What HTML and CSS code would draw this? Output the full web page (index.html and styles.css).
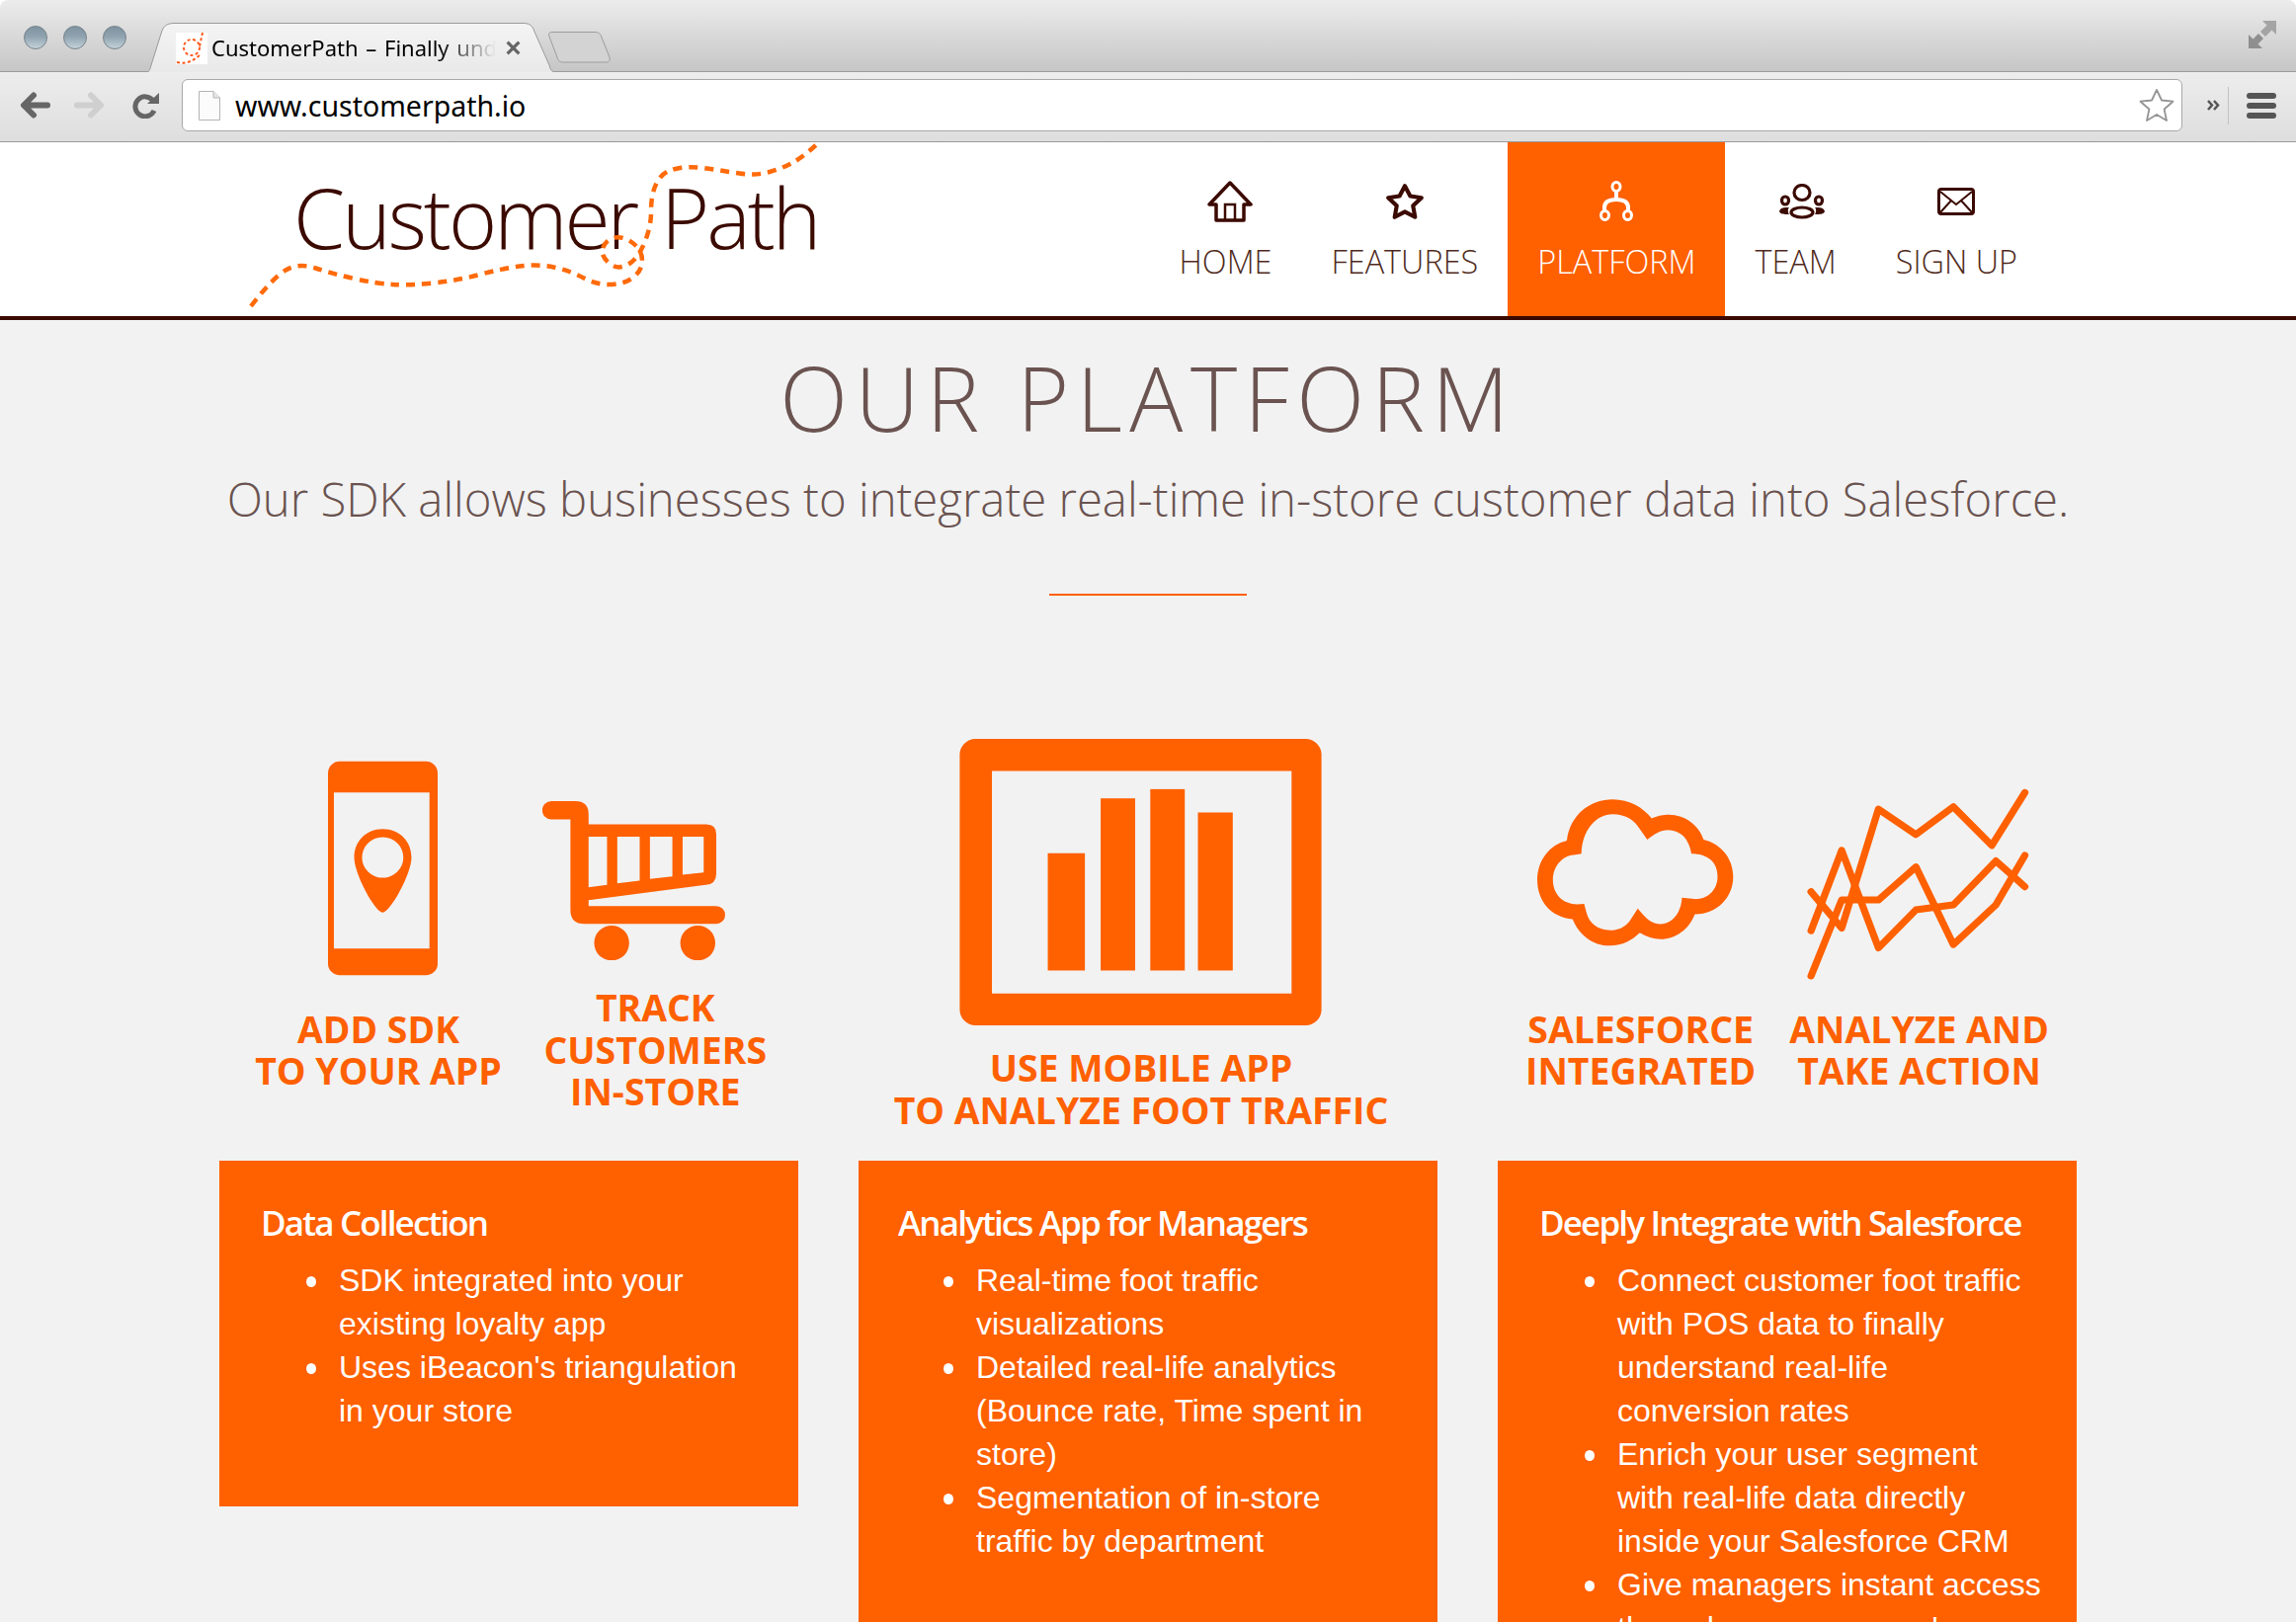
FILE: index.html
```html
<!DOCTYPE html>
<html lang="en">
<head>
    <meta charset="UTF-8">
    <title>CustomerPath - Finally understand</title>
    <link rel="stylesheet" href="styles.css">
</head>
<body>
    <!-- Browser window -->
    <div class="tabstrip">
        <div class="dots">
            <span class="dot"></span>
            <span class="dot"></span>
            <span class="dot"></span>
        </div>
        <div class="tab">
            <svg class="tab-shape" viewBox="0 0 410 50">
                <defs>
                    <linearGradient id="tabFill" x1="0" y1="0" x2="0" y2="1">
                        <stop offset="0" stop-color="#f4f4f4"/>
                        <stop offset="1" stop-color="#e9e9e9"/>
                    </linearGradient>
                </defs>
                <path d="M0 49.500C1 49 2 47 3 43L14 8C16 3 20 .5 26 .5H380C386 .5 389 3 391 9L406 43C407 47 408 49 410 49.500V50H0Z" fill="url(#tabFill)"/>
                <path d="M0 49.500C1 49 2 47 3 43L14 8C16 3 20 .5 26 .5H380C386 .5 389 3 391 9L406 43C407 47 408 49 410 49.500" fill="none" stroke="#9a9a9a"/>
            </svg>
            <svg class="favicon" viewBox="0 0 32 32">
                <rect width="32" height="32" fill="#fff"/>
                <circle cx="16" cy="15" r="8" fill="none" stroke="#ff5a1e" stroke-width="2" stroke-dasharray="3 2.500"/>
                <path d="M27 0L24 14M1 30Q14 33 25 22" fill="none" stroke="#ff5a1e" stroke-width="2" stroke-dasharray="3 2.500"/>
            </svg>
            <span class="tab-title">CustomerPath – Finally understand</span>
            <svg class="tab-close" viewBox="0 0 14 14">
                <path d="M1.500 1.500L12.500 12.500M12.500 1.500L1.500 12.500" stroke="#666" stroke-width="3"/>
            </svg>
        </div>
        <svg class="new-tab" viewBox="0 0 64 32">
            <path d="M5 .5H48C52 .5 54 2 55 6L63 26C64 29 62 31 60 31H17C13 31 11 30 10 26L2 5C1 2 2 .5 5 .5Z" fill="#d3d3d3" stroke="#9c9c9c"/>
        </svg>
        <svg class="fullscreen" viewBox="0 0 28 28">
            <path d="M14 0H28V14L23.500 9.500 17 16 12 11 18.500 4.500Z" fill="#a4a4a4"/>
            <path d="M0 14V28H14L9.500 23.500 15 18 10 13 4.500 18.500Z" fill="#8f8f8f"/>
        </svg>
    </div>

    <div class="toolbar">
        <svg class="tool-back" viewBox="0 0 31 27">
            <path d="M28 13.500H5M14 3.500L4 13.500L14 23.500" fill="none" stroke="#666" stroke-width="6" stroke-linecap="round" stroke-linejoin="round"/>
        </svg>
        <svg class="tool-forward" viewBox="0 0 31 27">
            <path d="M3 13.500H26M17 3.500L27 13.500L17 23.500" fill="none" stroke="#cfcfcf" stroke-width="6" stroke-linecap="round" stroke-linejoin="round"/>
        </svg>
        <svg class="tool-reload" viewBox="0 0 27 26">
            <path d="M21 8A10 10 0 1 0 22 18" fill="none" stroke="#666" stroke-width="5"/>
            <path d="M15 11H27V0Z" fill="#666"/>
        </svg>
        <div class="address">
            <svg class="page-icon" viewBox="0 0 22 30">
                <path d="M.5 .5H15L21.500 7V29.500H.5Z" fill="#fbfbfb" stroke="#b5b5b5"/>
                <path d="M15 .5V7H21.500" fill="#e6e6e6" stroke="#b5b5b5"/>
            </svg>
            <span class="url">www.customerpath.io</span>
            <svg class="bookmark" viewBox="0 0 36 35">
                <path d="M18 2L23 12.500 34.500 13.700 25.600 21.500 28 33 18 27 8 33 10.400 21.500 1.500 13.700 13 12.500Z" fill="#fff" stroke="#949494" stroke-width="1.800" stroke-linejoin="round"/>
            </svg>
        </div>
        <svg class="chevrons" viewBox="0 0 13 11">
            <path d="M1 1L5 5.500L1 10M7 1L11 5.500L7 10" fill="none" stroke="#555" stroke-width="2.500"/>
        </svg>
        <span class="tool-sep"></span>
        <div class="hamburger">
            <span></span>
            <span></span>
            <span></span>
        </div>
    </div>

    <!-- Site header -->
    <header class="site-header">
        <div class="logo">
            <span class="logo-text">Customer Path</span>
            <svg class="logo-path" viewBox="250 140 585 175">
                <path d="M254 310Q277 280 290 273Q303 266 319.500 271.500Q336 277 358.500 282Q381 287 397.500 288Q414 289 438.500 286.500Q463 284 485.500 278Q508 272 526 269.500Q544 267 560.500 270.500Q577 274 591 281.500Q605 289 619.500 288Q634 287 642 280Q650 273 650 264Q650 255 644 249Q638 243 631 241Q624 239 618 242Q612 245 610 251.500Q608 258 615 265Q622 272 630 270Q638 268 644 260.500Q650 253 654.500 240Q659 227 659 215Q659 203 661 195Q663 187 668 180Q673 173 686 170.500Q699 168 715.500 170.500Q732 173 748.500 175.500Q765 178 779 174Q793 170 803.500 164Q814 158 828 145" fill="none" stroke="#ff6a0a" stroke-width="4.500" stroke-dasharray="9 7"/>
            </svg>
        </div>
        <nav class="main-nav">
            <a class="nav-item">
                <span class="nav-icon nav-icon-home">
                    <svg width="46" height="42" viewBox="0 0 46 42">
                        <path d="M23 2L44 24H37V40H9V24H2Z" fill="none" stroke="#3b0a00" stroke-width="3.500" stroke-linejoin="round"/>
                        <path d="M18 40V24H28V40" fill="none" stroke="#3b0a00" stroke-width="2.500"/>
                    </svg>
                </span>
                Home
            </a>
            <a class="nav-item">
                <span class="nav-icon">
                    <svg width="40" height="38" viewBox="0 0 36 35">
                        <path d="M18 3L23 12.500 33.500 14 25.600 21.500 27.500 32 18 27 8.500 32 10.400 21.500 2.500 14 13 12.500Z" fill="none" stroke="#3b0a00" stroke-width="3.800" stroke-linejoin="round"/>
                    </svg>
                </span>
                Features
            </a>
            <a class="nav-item nav-item-active">
                <span class="nav-icon">
                    <svg width="34" height="42" viewBox="0 0 34 42">
                        <path d="M17 11V19M5 30V27C5 21 10 19 17 19S29 21 29 27V30" fill="none" stroke="#fff" stroke-width="4"/>
                        <ellipse cx="17" cy="6" rx="4" ry="4.500" fill="none" stroke="#fff" stroke-width="3"/>
                        <ellipse cx="5.500" cy="35" rx="4" ry="4.500" fill="none" stroke="#fff" stroke-width="3"/>
                        <ellipse cx="28.500" cy="35" rx="4" ry="4.500" fill="none" stroke="#fff" stroke-width="3"/>
                    </svg>
                </span>
                Platform
            </a>
            <a class="nav-item">
                <span class="nav-icon nav-icon-team">
                    <svg width="48" height="36" viewBox="0 0 48 36">
                        <g fill="none" stroke="#3b0a00" stroke-width="3.200">
                            <ellipse cx="24" cy="9" rx="8" ry="7.500"/>
                            <ellipse cx="7" cy="17" rx="3.500" ry="4"/>
                            <ellipse cx="41" cy="17" rx="3.500" ry="4"/>
                            <ellipse cx="24" cy="29" rx="11" ry="5"/>
                        </g>
                        <path d="M1 28C2 24 6 24 11 24 9 26 10 30 11 31 6 31 2 31 1 28ZM47 28C46 24 42 24 37 24 39 26 38 30 37 31 42 31 46 31 47 28Z" fill="#3b0a00"/>
                    </svg>
                </span>
                Team
            </a>
            <a class="nav-item">
                <span class="nav-icon">
                    <svg width="38" height="28" viewBox="0 0 38 28">
                        <rect x="1.500" y="1.500" width="35" height="25" rx="2.500" fill="none" stroke="#3b0a00" stroke-width="3"/>
                        <path d="M3 4L19 17 35 4M3 25L14 13M35 25L24 13" fill="none" stroke="#3b0a00" stroke-width="2"/>
                    </svg>
                </span>
                Sign up
            </a>
        </nav>
    </header>

    <!-- Platform section -->
    <main class="platform">
        <h1 class="platform-title">Our Platform</h1>
        <p class="platform-lead">Our SDK allows businesses to integrate real-time in-store customer data into Salesforce.</p>
        <hr class="platform-rule">

        <div class="columns">
            <section class="column">
                <div class="steps steps-wide">
                    <div class="step">
                        <svg class="icon-phone" width="111" height="218" viewBox="95 86 335 654">
                            <path fill-rule="evenodd" d="M131 86H394A36 36 0 0 1 430 122V704A36 36 0 0 1 394 740H131A36 36 0 0 1 95 704V122A36 36 0 0 1 131 86ZM113 181V658H405V181Z" fill="#ff6000"/>
                            <path fill-rule="evenodd" d="M262 293C315 293 350 332 350 380 350 430 285 548 262 548 239 548 175 430 175 380 175 332 210 293 262 293ZM262 318A63 62 0 1 0 262.100 318Z" fill="#ff6000"/>
                        </svg>
                        <div class="step-caption">Add SDK<br>to your app</div>
                    </div>
                    <div class="step">
                        <svg class="icon-cart" width="185" height="161" viewBox="748 210 554 482">
                            <path fill-rule="evenodd" d="M775 210H848Q888 210 888 250V280H1245Q1275 280 1275 310V430Q1275 462 1243 464L888 510V528H1275A27 27 0 0 1 1275 582H875Q833 582 833 540V265H775A27.500 27.500 0 0 1 775 210ZM888 318V471L944 464V318ZM975 318V459L1043 451V318ZM1074 318V446L1142 438V318ZM1173 318V433L1237 426V318Z" fill="#ff6000"/>
                            <circle cx="958" cy="640" r="53" fill="#ff6000"/>
                            <circle cx="1219" cy="640" r="53" fill="#ff6000"/>
                        </svg>
                        <div class="step-caption">Track<br>customers<br>in-store</div>
                    </div>
                </div>
                <div class="card">
                    <h3 class="card-title">Data Collection</h3>
                    <ul class="card-list">
                        <li>SDK integrated into your existing loyalty app</li>
                        <li>Uses iBeacon's triangulation in your store</li>
                    </ul>
                </div>
            </section>

            <section class="column">
                <div class="steps steps-single">
                    <div class="step">
                        <svg class="icon-tablet" width="367" height="290" viewBox="64 50 1101 872">
                            <path fill-rule="evenodd" d="M112 50H1117A48 48 0 0 1 1165 98V874A48 48 0 0 1 1117 922H112A48 48 0 0 1 64 874V98A48 48 0 0 1 112 50ZM162 148V825H1074V148Z" fill="#ff6000"/>
                            <rect x="332" y="398" width="113" height="357" fill="#ff6000"/>
                            <rect x="493" y="231" width="105" height="524" fill="#ff6000"/>
                            <rect x="644" y="203" width="105" height="552" fill="#ff6000"/>
                            <rect x="789" y="274" width="106" height="481" fill="#ff6000"/>
                        </svg>
                        <div class="step-caption step-caption-low">Use mobile app<br>to analyze foot traffic</div>
                    </div>
                </div>
                <div class="card card-middle">
                    <h3 class="card-title">Analytics App for Managers</h3>
                    <ul class="card-list">
                        <li>Real-time foot traffic visualizations</li>
                        <li>Detailed real-life analytics (Bounce rate, Time spent in store)</li>
                        <li>Segmentation of in-store traffic by department</li>
                    </ul>
                </div>
            </section>

            <section class="column">
                <div class="steps steps-tight">
                    <div class="step">
                        <svg class="icon-cloud" width="200" height="149" viewBox="70 84 582 448" preserveAspectRatio="none">
                            <path fill-rule="evenodd" d="M160 210C170 130 230 85 295 85 345 85 385 110 410 143 430 133 445 131 460 131 510 131 550 165 563 207 615 220 650 265 650 320 650 385 600 435 537 434 520 480 480 510 437 510 415 510 395 503 375 491 350 515 325 530 287 530 235 530 195 495 177 449 115 445 73 395 73 330 73 270 110 222 160 210ZM203 250C205 180 245 130 295 130 335 130 360 150 375 175L397 207C420 190 435 178 458 178 495 178 520 205 527 250 575 250 604 275 604 320 604 360 575 390 535 388L499 384C497 430 470 464 437 464 410 464 395 450 369 417L345 455C330 475 310 483 288 483 250 483 225 460 218 430L211 403 190 404C150 404 119 375 119 330 119 290 145 257 180 254Z" fill="#ff6000"/>
                        </svg>
                        <div class="step-caption">Salesforce<br>integrated</div>
                    </div>
                    <div class="step">
                        <svg class="icon-chart" width="225" height="194" viewBox="865 52 653 580" preserveAspectRatio="none">
                            <g fill="none" stroke="#ff6000" stroke-width="21" stroke-linecap="round" stroke-linejoin="round">
                                <path d="M877 483L967 240 1075 535 1185 420 1295 405 1420 272 1505 350"/>
                                <path d="M877 365L967 475 1075 115 1185 192 1295 108 1408 225 1505 65"/>
                                <path d="M877 620L967 390H1075L1185 290 1295 525 1420 405 1505 255"/>
                            </g>
                        </svg>
                        <div class="step-caption">Analyze and<br>take action</div>
                    </div>
                </div>
                <div class="card">
                    <h3 class="card-title">Deeply Integrate with Salesforce</h3>
                    <ul class="card-list">
                        <li>Connect customer foot traffic with POS data to finally understand real-life conversion rates</li>
                        <li>Enrich your user segment with real-life data directly inside your Salesforce CRM</li>
                        <li>Give managers instant access through your company's</li>
                    </ul>
                </div>
            </section>
        </div>
    </main>
</body>
</html>
```

FILE: styles.css
```css
* {
    margin: 0;
    padding: 0;
    box-sizing: border-box;
}

html, body {
    height: 100%;
    overflow: hidden;
}

body {
    font-family: "Open Sans", "Noto Sans", sans-serif;
    background-color: #fff;
}

/* Browser window */
.tabstrip {
    display: flex;
    align-items: flex-end;
    height: 73px;
    border-bottom: 1px solid #9c9c9c;
    border-radius: 8px 8px 0 0;
    background: linear-gradient(#ececec, #c6c6c6);
}

.dots {
    display: flex;
    gap: 16px;
    align-self: flex-start;
    margin: 26px 22px 0 24px;
}

.dot {
    width: 24px;
    height: 24px;
    border-radius: 50%;
    border: 1px solid #75818a;
    background: linear-gradient(#7f94a1, #8ea3af 45%, #c4d2da);
}

.tab {
    position: relative;
    display: flex;
    align-items: center;
    width: 410px;
    height: 49px;
    margin-bottom: -1px;
    padding-left: 28px;
}

.tab-shape {
    position: absolute;
    left: 0;
    bottom: 0;
    width: 410px;
    height: 50px;
}

.favicon {
    position: relative;
    width: 32px;
    height: 32px;
    flex-shrink: 0;
}

.tab-title {
    position: relative;
    width: 288px;
    margin: 0 0 2px 4px;
    overflow: hidden;
    white-space: nowrap;
    font-family: "Noto Sans", sans-serif;
    font-size: 22px;
    word-spacing: 2px;
    color: #000;
    -webkit-mask-image: linear-gradient(to right, #000 80%, transparent);
    mask-image: linear-gradient(to right, #000 80%, transparent);
}

.tab-close {
    position: relative;
    width: 15px;
    height: 15px;
    margin-left: 10px;
}

.new-tab {
    width: 64px;
    height: 32px;
    margin: 0 0 8px -6px;
}

.fullscreen {
    width: 28px;
    height: 28px;
    margin: 0 20px 23px auto;
}

.toolbar {
    display: flex;
    align-items: center;
    height: 71px;
    padding-bottom: 3px;
    border-bottom: 1px solid #9a9a9a;
    background: linear-gradient(#ededed, #dedede);
}

.tool-back {
    width: 31px;
    height: 27px;
    margin-left: 20px;
}

.tool-forward {
    width: 31px;
    height: 27px;
    margin-left: 24px;
}

.tool-reload {
    width: 27px;
    height: 26px;
    margin-left: 28px;
}

.address {
    display: flex;
    align-items: center;
    flex: 1;
    height: 53px;
    margin-left: 23px;
    padding: 0 7px 0 16px;
    border: 1px solid #a8a8a8;
    border-radius: 6px;
    background-color: #fff;
}

.page-icon {
    width: 22px;
    height: 30px;
}

.url {
    flex: 1;
    margin-left: 15px;
    font-family: "Noto Sans", sans-serif;
    font-size: 28.500px;
    color: #000;
}

.bookmark {
    width: 36px;
    height: 35px;
}

.chevrons {
    width: 13px;
    height: 11px;
    margin-left: 25px;
}

.tool-sep {
    width: 1px;
    height: 38px;
    margin-left: 8px;
    background-color: #c2c2c2;
}

.hamburger {
    display: flex;
    flex-direction: column;
    gap: 4px;
    margin: 0 20px 0 18px;
}

.hamburger span {
    display: block;
    width: 30px;
    height: 6px;
    border-radius: 3px;
    background-color: #555;
}

/* Site header */
.site-header {
    display: flex;
    justify-content: space-between;
    height: 180px;
    padding: 0 252px 0 297px;
    border-bottom: 4px solid #3b0a00;
    background-color: #fff;
}

.logo {
    position: relative;
    flex: 1;
}

.logo-text {
    display: block;
    margin-top: 26px;
    font-size: 84px;
    font-weight: 300;
    line-height: 100px;
    letter-spacing: -3px;
    word-spacing: 6px;
    color: #3b0a00;
    white-space: nowrap;
}

.logo-path {
    position: absolute;
    left: -47px;
    top: -4px;
    width: 585px;
    height: 175px;
}

.main-nav {
    display: flex;
}

.nav-item {
    display: flex;
    flex-direction: column;
    align-items: center;
    padding: 39px 30px 0;
    font-size: 32.400px;
    font-weight: 300;
    line-height: 44px;
    text-transform: uppercase;
    color: #4f2a20;
}

.nav-item-active {
    background-color: #ff6000;
    color: #fff;
}

.nav-icon {
    display: flex;
    align-items: center;
    justify-content: center;
    height: 42px;
    margin-bottom: 17px;
}

.nav-icon-home {
    margin-left: 8px;
}

.nav-icon-team {
    margin-left: 12px;
}

/* Platform section */
.platform {
    padding: 28px 222px 0;
    background-color: #f2f2f2;
}

.platform-title {
    font-size: 90px;
    font-weight: 300;
    line-height: 100px;
    letter-spacing: 7.500px;
    text-align: center;
    text-transform: uppercase;
    color: #6a5350;
}

.platform-lead {
    margin-top: 23px;
    font-size: 47.300px;
    font-weight: 300;
    line-height: 60px;
    text-align: center;
    white-space: nowrap;
    color: #6a5350;
}

.platform-rule {
    width: 200px;
    height: 2px;
    margin: 66px auto 145px;
    border: none;
    background-color: #ff6000;
}

.columns {
    display: grid;
    grid-template-columns: repeat(3, 1fr);
    column-gap: 61px;
    align-items: start;
}

.steps {
    display: flex;
    justify-content: center;
    height: 427px;
}

.steps-wide {
    gap: 41px;
    padding-left: 6px;
}

.steps-tight {
    gap: 34px;
}

.steps-single {
    padding-right: 14px;
}

.step {
    display: flex;
    flex-direction: column;
    align-items: center;
}

.step svg {
    flex-shrink: 0;
}

.step-caption {
    display: flex;
    align-items: center;
    justify-content: center;
    height: 130px;
    font-size: 37.400px;
    font-weight: 700;
    line-height: 42.500px;
    text-align: center;
    text-transform: uppercase;
    white-space: nowrap;
    color: #ff6000;
}

.step-caption-low {
    display: block;
    height: auto;
    margin-top: 22px;
}

/* each icon sits at its own height above the caption box (which starts at 250px) */
.icon-phone {
    margin: 22px 0 10px 10px;
}

.icon-cart {
    margin: 63px 44px 26px 0;
}

.icon-cloud {
    margin: 61px 12px 40px 0;
}

.icon-chart {
    margin: 50px 3px 6px 0;
}

.card {
    padding: 38px 36px 75px 42px;
    background-color: #ff6000;
    color: #fff;
}

.card-middle {
    padding-left: 40px;
}

.card-title {
    font-size: 35px;
    font-weight: 600;
    line-height: 50px;
    letter-spacing: -1.850px;
}

.card-list {
    margin-top: 11px;
    padding-left: 79px;
    list-style: none;
    font-family: "Liberation Sans", Arial, sans-serif;
    font-size: 32px;
    line-height: 44px;
}

.card-list li {
    position: relative;
}

/* bullets are bigger and further out than the default disc */
.card-list li::before {
    content: "";
    position: absolute;
    left: -33px;
    top: 18px;
    width: 10px;
    height: 11px;
    border-radius: 50%;
    background-color: #fff;
}
```
